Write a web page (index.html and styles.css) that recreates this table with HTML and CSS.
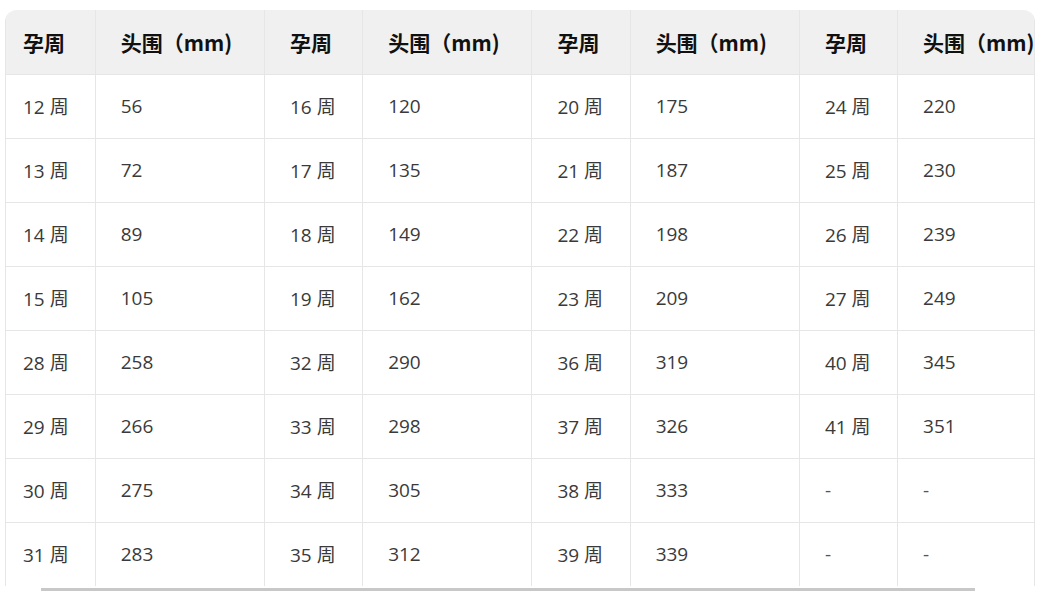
FILE: index.html
```html
<!DOCTYPE html>
<html lang="zh-CN">
<head>
<meta charset="utf-8">
<title>孕周与头围对照表</title>
<link rel="stylesheet" href="styles.css">
</head>
<body>
<div class="page">
  <div class="table-wrap">
    <table class="grid">
      <colgroup>
        <col class="c-week first"><col class="c-val">
        <col class="c-week"><col class="c-val">
        <col class="c-week"><col class="c-val">
        <col class="c-week"><col class="c-val last">
      </colgroup>
      <thead>
        <tr>
          <th>孕周</th><th>头围（mm)</th>
          <th>孕周</th><th>头围（mm)</th>
          <th>孕周</th><th>头围（mm)</th>
          <th>孕周</th><th>头围（mm)</th>
        </tr>
      </thead>
      <tbody>
        <tr><td>12 周</td><td>56</td><td>16 周</td><td>120</td><td>20 周</td><td>175</td><td>24 周</td><td>220</td></tr>
        <tr><td>13 周</td><td>72</td><td>17 周</td><td>135</td><td>21 周</td><td>187</td><td>25 周</td><td>230</td></tr>
        <tr><td>14 周</td><td>89</td><td>18 周</td><td>149</td><td>22 周</td><td>198</td><td>26 周</td><td>239</td></tr>
        <tr><td>15 周</td><td>105</td><td>19 周</td><td>162</td><td>23 周</td><td>209</td><td>27 周</td><td>249</td></tr>
        <tr><td>28 周</td><td>258</td><td>32 周</td><td>290</td><td>36 周</td><td>319</td><td>40 周</td><td>345</td></tr>
        <tr><td>29 周</td><td>266</td><td>33 周</td><td>298</td><td>37 周</td><td>326</td><td>41 周</td><td>351</td></tr>
        <tr><td>30 周</td><td>275</td><td>34 周</td><td>305</td><td>38 周</td><td>333</td><td class="dash">-</td><td class="dash">-</td></tr>
        <tr><td>31 周</td><td>283</td><td>35 周</td><td>312</td><td>39 周</td><td>339</td><td class="dash">-</td><td class="dash">-</td></tr>
      </tbody>
    </table>
  </div>
  <div class="scrollbar"><div class="thumb"></div></div>
</div>
</body>
</html>
```

FILE: styles.css
```css
html, body {
  margin: 0;
  padding: 0;
  background: #ffffff;
}

body {
  font-family: "Open Sans", "Noto Sans CJK SC", sans-serif;
  color: #333333;
}

.page {
  padding: 10px 0 0 5px;
  width: 1030px;
}

.table-wrap {
  width: 1030px;
  box-sizing: border-box;
  overflow: hidden;
  border-left: 1px solid #e6e6e6;
  border-right: 1px solid #e6e6e6;
  border-radius: 12px 12px 0 0;
}

.grid {
  border-collapse: collapse;
  table-layout: fixed;
  width: 1061px;
}

.c-week { width: 98px; }
.c-week.first { width: 89px; }
.c-val { width: 169px; }

.grid tr {
  height: 64px;
}

.grid th,
.grid td {
  padding: 0 0 0 25px;
  text-align: left;
  vertical-align: middle;
  white-space: nowrap;
  border-left: 1px solid #e6e6e6;
  border-bottom: 1px solid #e6e6e6;
  font-size: 19px;
}

.grid th:first-child,
.grid td:first-child {
  border-left: none;
  padding-left: 17px;
}

.grid th {
  background: #f0f0f0;
  color: #111111;
  font-weight: 700;
  font-size: 21px;
  font-family: "Noto Sans CJK SC", "Open Sans", sans-serif;
}

.grid td {
  color: #3a3a3a;
  font-weight: 400;
}

.grid tbody tr:last-child td {
  border-bottom: none;
}

.grid td.dash {
  color: #555555;
}

.scrollbar {
  height: 8px;
  margin-top: 2px;
  padding-left: 36px;
}

.thumb {
  width: 934px;
  height: 8px;
  background: #c8c8c8;
}
```
